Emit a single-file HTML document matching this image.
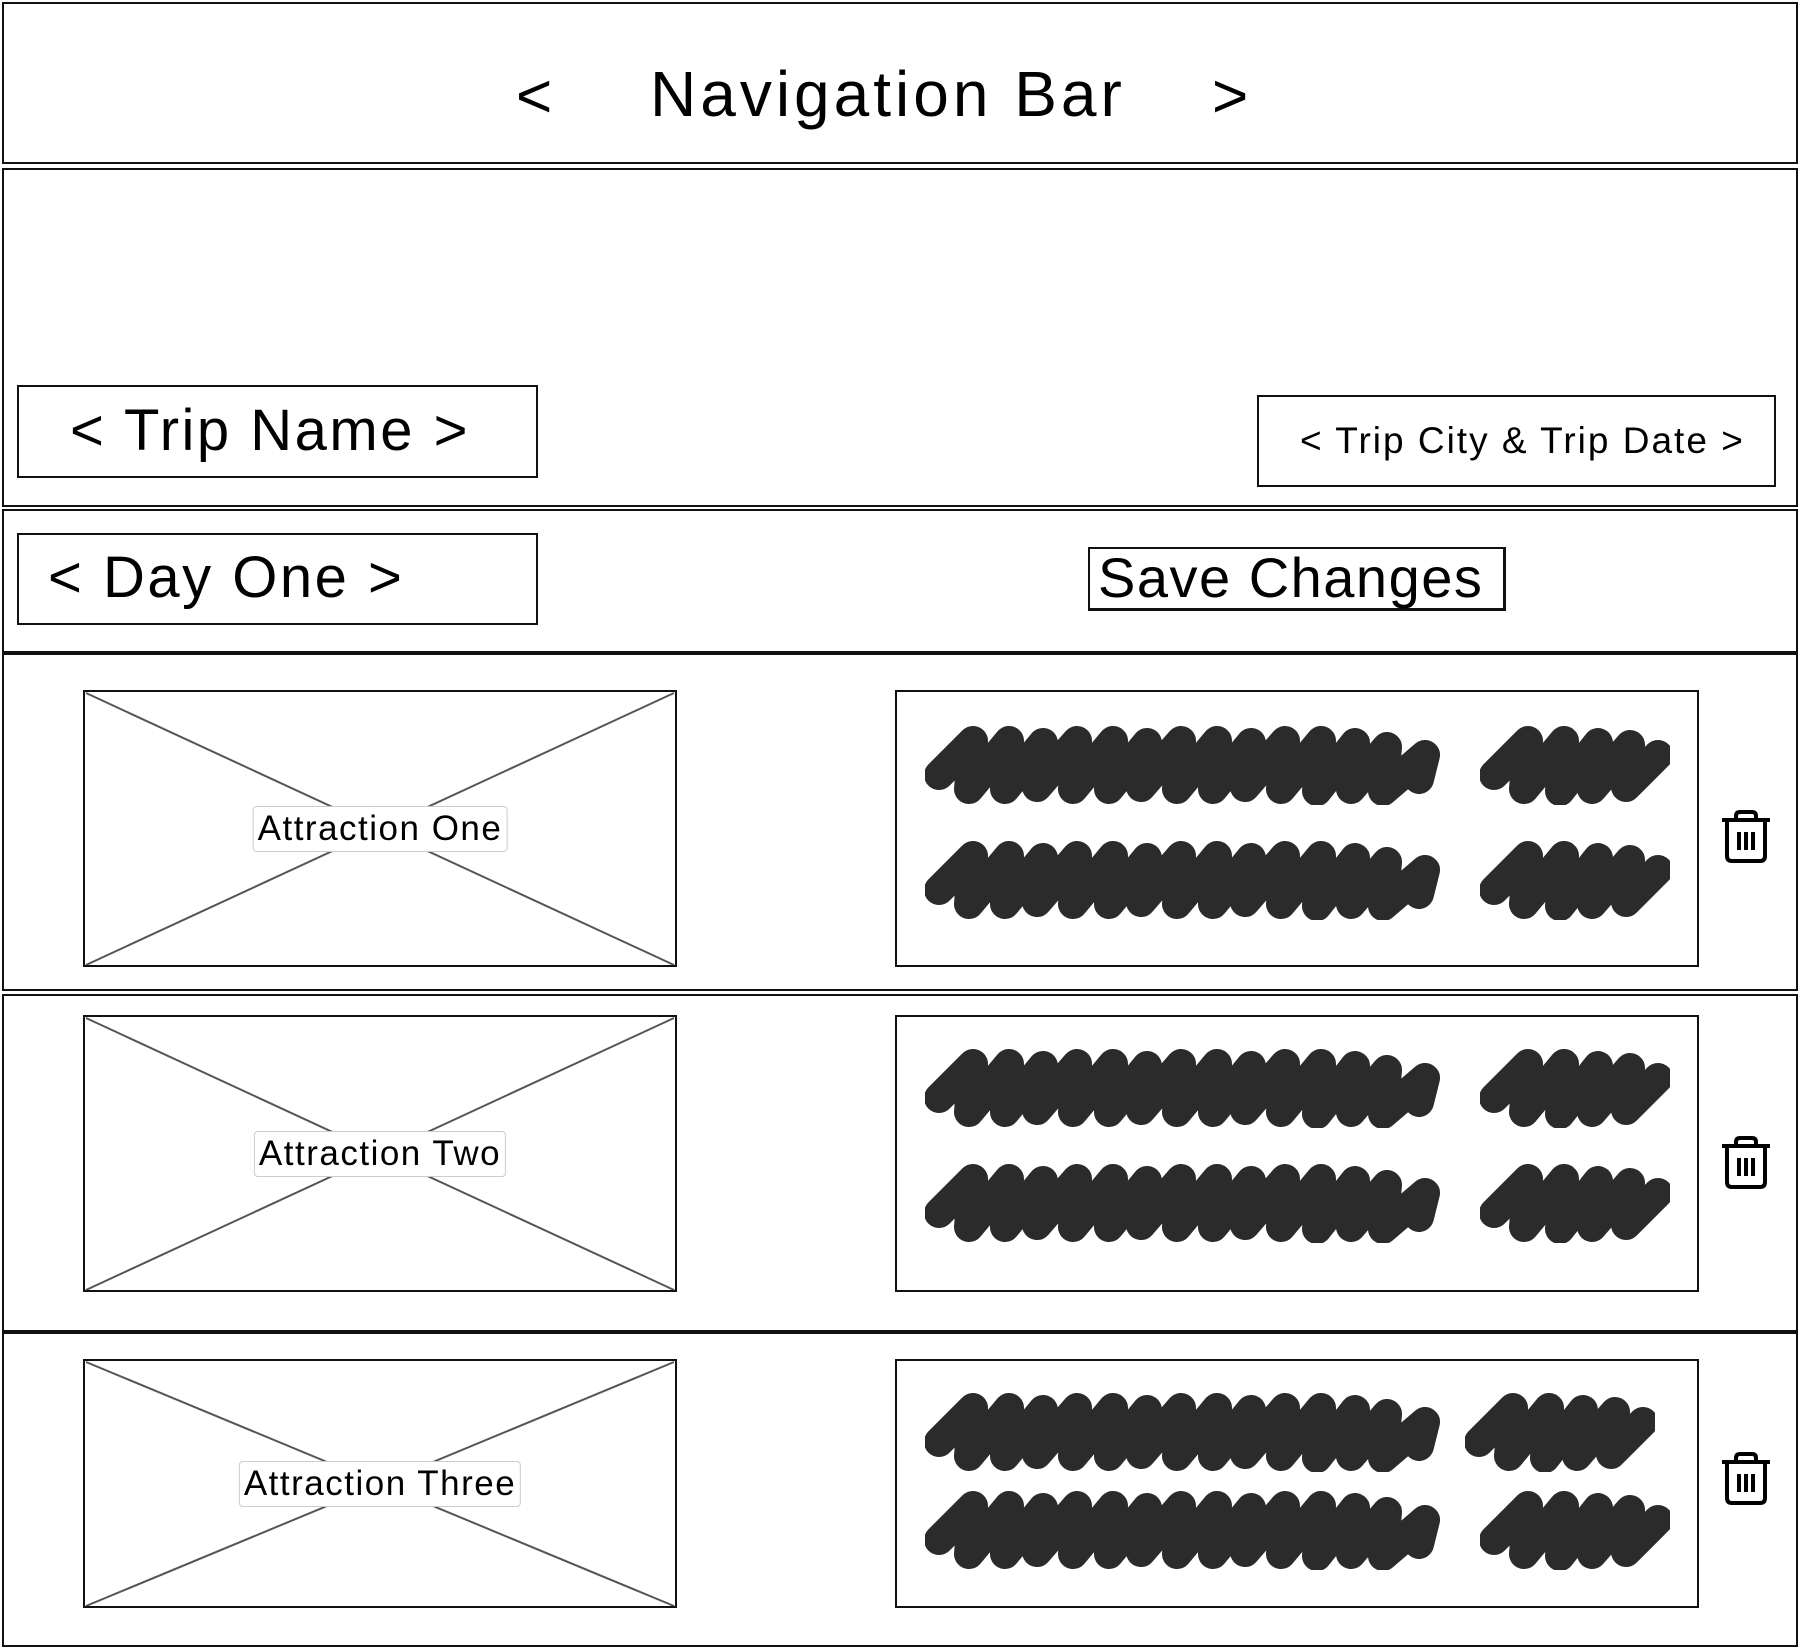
<!DOCTYPE html>
<html><head><meta charset="utf-8">
<style>
html,body{margin:0;padding:0;background:#fff;}
body{width:1801px;height:1649px;position:relative;overflow:hidden;font-family:"Liberation Sans",sans-serif;color:#000;}
.b{position:absolute;box-sizing:border-box;border:2px solid #111;}
.t{position:absolute;white-space:nowrap;line-height:1;}
.lab{position:absolute;background:#fff;border:1px solid #ccc;border-radius:4px;font-size:35px;line-height:44px;padding:0 4px;transform:translate(-50%,-50%);white-space:nowrap;letter-spacing:1.5px;}
</style></head><body>
<div class="b" style="left:2px;top:2px;width:1796px;height:162px"></div>
<div class="t" style="left:516px;top:66px;font-size:62px">&lt;</div>
<div class="t" style="left:650px;top:62px;font-size:64px;letter-spacing:4px">Navigation Bar</div>
<div class="t" style="left:1212px;top:66px;font-size:62px">&gt;</div>

<div class="b" style="left:2px;top:168px;width:1796px;height:339px"></div>
<div class="b" style="left:17px;top:385px;width:521px;height:93px"></div>
<div class="t" style="left:70px;top:402px;font-size:58px;letter-spacing:2.5px">&lt; Trip Name &gt;</div>
<div class="b" style="left:1257px;top:395px;width:519px;height:92px"></div>
<div class="t" style="left:1300px;top:422px;font-size:37px;letter-spacing:2px">&lt; Trip City &amp; Trip Date &gt;</div>

<div class="b" style="left:2px;top:509px;width:1796px;height:144px"></div>
<div class="b" style="left:17px;top:533px;width:521px;height:92px"></div>
<div class="t" style="left:48px;top:549px;font-size:58px;letter-spacing:2.5px">&lt; Day One &gt;</div>
<div class="b" style="left:1088px;top:547px;width:418px;height:64px;border-width:2px 3px 3px 2px"></div>
<div class="t" style="left:1098px;top:550px;font-size:56px;letter-spacing:1.5px">Save Changes</div>

<div class="b" style="left:2px;top:653px;width:1796px;height:338px"></div>
<div class="b" style="left:2px;top:994px;width:1796px;height:338px"></div>
<div class="b" style="left:2px;top:1332px;width:1796px;height:315px"></div>

<svg width="1801" height="1649" style="position:absolute;left:0;top:0">
<defs>
<symbol id="big" viewBox="0 0 520 80" width="520" height="80">
<path d="M14,50 L48,16 L44,64 L84,16 L80,64 L118,18 L112,62 L152,16 L148,64 L188,16 L184,64 L222,18 L216,62 L256,16 L252,64 L292,16 L288,64 L326,18 L320,62 L360,16 L356,64 L396,16 L392,66 L430,18 L426,64 L462,22 L458,66 L500,30 L494,54" fill="none" stroke="#2b2b2b" stroke-width="30" stroke-linejoin="round" stroke-linecap="round"/>
</symbol>
<symbol id="small" viewBox="0 0 190 80" width="190" height="80">
<path d="M14,50 L48,16 L44,64 L84,16 L80,66 L118,18 L112,64 L150,20 L146,62 L178,30" fill="none" stroke="#2b2b2b" stroke-width="30" stroke-linejoin="round" stroke-linecap="round"/>
</symbol>
<symbol id="trash" viewBox="0 0 52 54" width="52" height="54">
<g fill="none" stroke="#000" stroke-width="4" stroke-linejoin="round">
<path d="M2,10 H50"/><path d="M16,10 V6 Q16,2 20,2 H32 Q36,2 36,6 V10"/>
<path d="M7,10 V46 Q7,51 12,51 H40 Q45,51 45,46 V10"/>
<path d="M19,22 V40 M26,22 V40 M33,22 V40"/>
</g>
</symbol>
</defs>
<g stroke="#555" stroke-width="2">
<line x1="86" y1="693" x2="674" y2="965"/><line x1="674" y1="693" x2="86" y2="965"/>
<line x1="86" y1="1018" x2="674" y2="1290"/><line x1="674" y1="1018" x2="86" y2="1290"/>
<line x1="86" y1="1362" x2="674" y2="1606"/><line x1="674" y1="1362" x2="86" y2="1606"/>
</g>
<g fill="none" stroke="#111" stroke-width="2">
<rect x="84" y="691" width="592" height="275"/>
<rect x="84" y="1016" width="592" height="275"/>
<rect x="84" y="1360" width="592" height="247"/>
<rect x="896" y="691" width="802" height="275"/>
<rect x="896" y="1016" width="802" height="275"/>
<rect x="896" y="1360" width="802" height="247"/>
</g>
<use href="#big" x="925" y="725"/><use href="#small" x="1480" y="725"/>
<use href="#big" x="925" y="840"/><use href="#small" x="1480" y="840"/>
<use href="#big" x="925" y="1048"/><use href="#small" x="1480" y="1048"/>
<use href="#big" x="925" y="1163"/><use href="#small" x="1480" y="1163"/>
<use href="#big" x="925" y="1392"/><use href="#small" x="1465" y="1392"/>
<use href="#big" x="925" y="1490"/><use href="#small" x="1480" y="1490"/>
<use href="#trash" x="1720" y="810"/>
<use href="#trash" x="1720" y="1136"/>
<use href="#trash" x="1720" y="1452"/>
</svg>

<div class="lab" style="left:380px;top:829px">Attraction One</div>
<div class="lab" style="left:380px;top:1154px">Attraction Two</div>
<div class="lab" style="left:380px;top:1484px">Attraction Three</div>
</body></html>
